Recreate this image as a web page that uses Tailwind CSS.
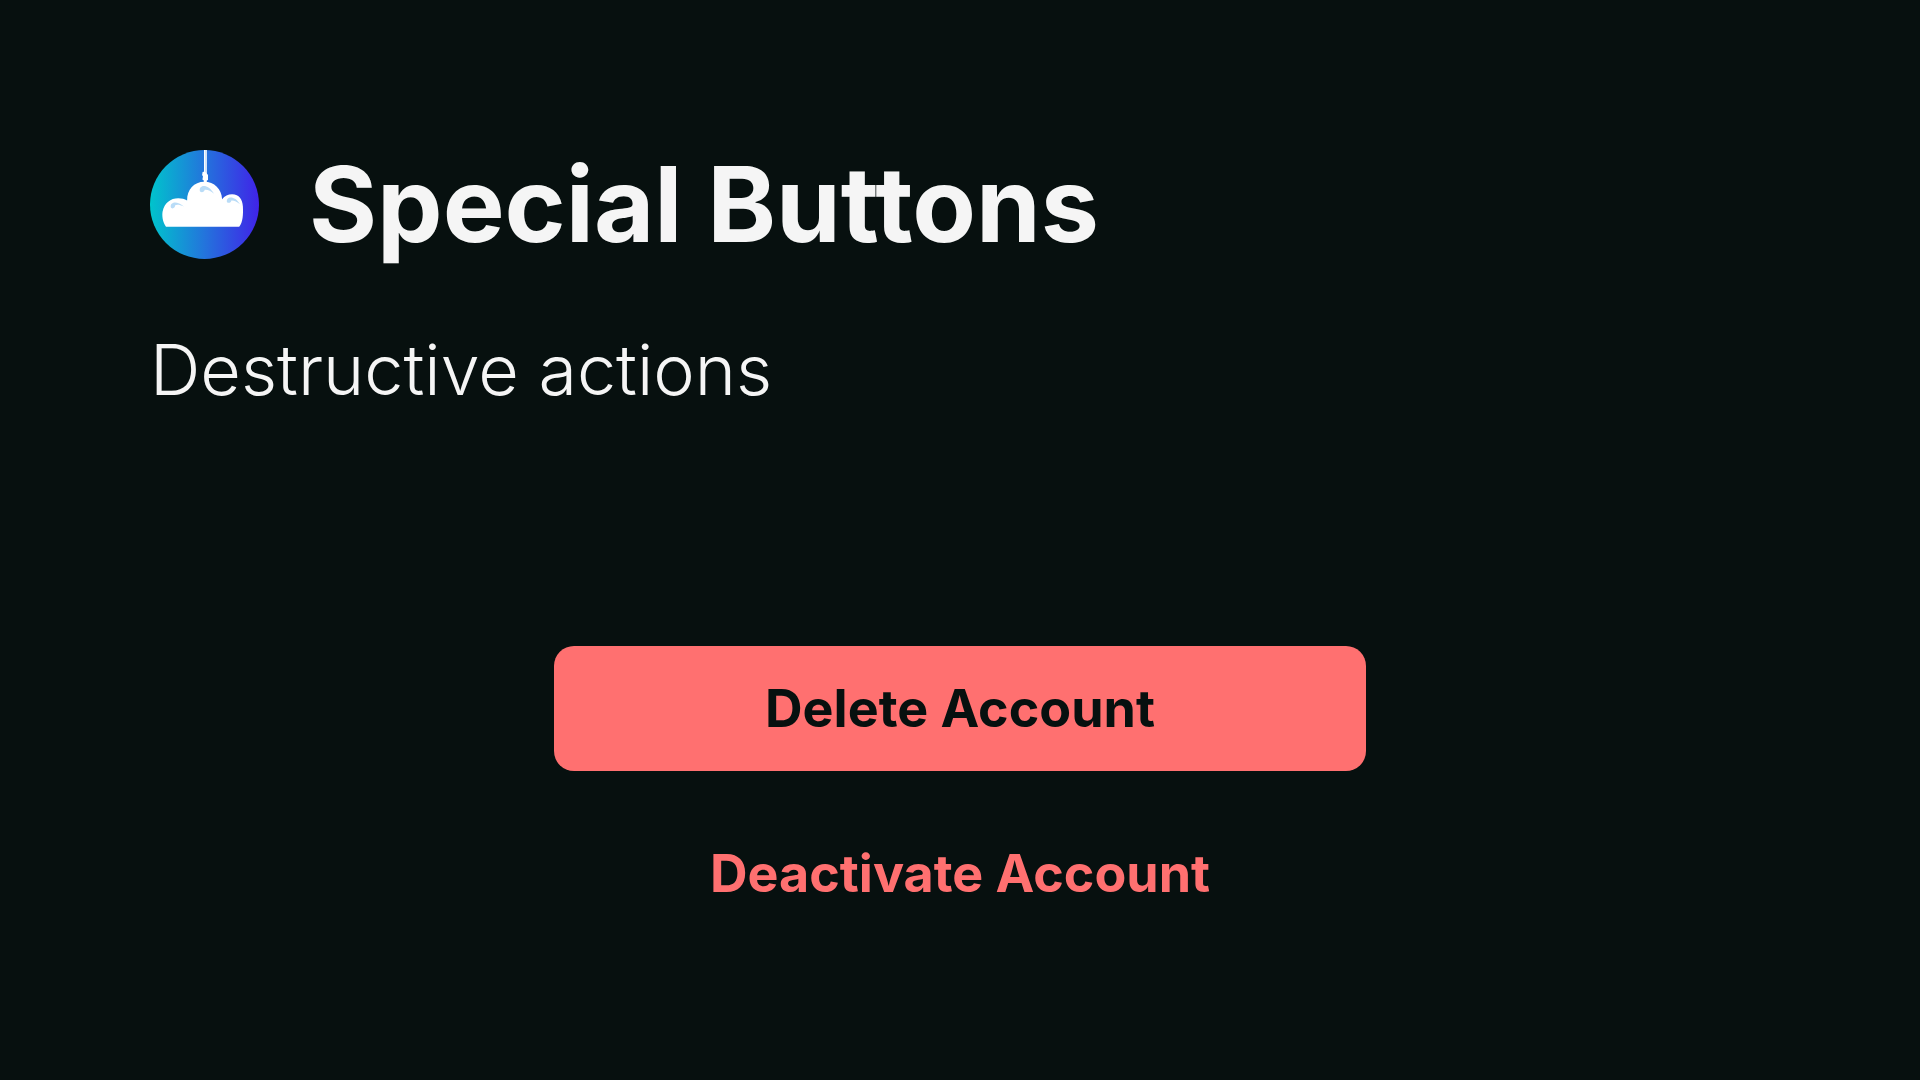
<!DOCTYPE html>
<html lang="en">
  <head>
    <meta charset="UTF-8">
    <meta name="viewport" content="width=device-width, initial-scale=1.0">
    <title>Special Buttons</title>
    <script src="https://cdn.jsdelivr.net/npm/@tailwindcss/browser@4"></script>
  </head>
  <body class="bg-[#07100f] min-h-screen font-['Inter',sans-serif] text-[#f5f5f5]">
    <main class="px-[150px] pt-[144px] pb-16">
      <header>
        <div class="flex items-center gap-[50px]">
          <svg class="size-[109px] shrink-0" viewBox="0 0 109 109" fill="none" role="img" aria-label="Logo">
            <defs>
              <linearGradient id="sky" x1="0" y1="0" x2="1" y2="0">
                <stop offset="0" stop-color="#00c4cc" />
                <stop offset="0.5" stop-color="#2374dc" />
                <stop offset="1" stop-color="#4023e8" />
              </linearGradient>
            </defs>
            <circle cx="54.5" cy="54.5" r="54.5" fill="url(#sky)" />
            <!-- rope -->
            <path d="M54 0h2.8v24H54z" fill="#fff" />
            <path d="M55.4 0v23" stroke="#a9cdf5" stroke-width="0.6" />
            <path d="M52.600 22l2.200-.4 2.400 2.400.8 1v5l-1.200.6v1.600h-3v-1.600l-1.400-1.200.6-3-.9-1.400z" fill="#fff" />
            <!-- cloud -->
            <path d="M16 76.7C12.4 72 11.9 65 12.6 61.5 14.4 53 20.5 48.3 28.3 48.3c3.4 0 6.3.9 8.8 2.2C37 39.500 44 31.700 54.300 31.700c10 0 17.400 7.300 17.800 17.500 2.500-3.200 6-4.900 10-4.900 7.200 0 10.300 5 10.800 12.200.4 8 0 16-3.700 20.200z" fill="#fff" />
            <g fill="#b9dcf7">
              <path d="M21 57.800C19.300 52.800 25.800 49.500 34 56.600 29.500 54.300 26.500 54.300 25.200 55.300 25 57.800 23 59.300 21 57.800z" />
              <path d="M50 41.500C48 35.200 57.500 32.500 64 43.800 60.500 40.500 57.500 39.300 54.700 39.700 54.300 42 52 43 50 41.500z" />
              <path d="M77 52.300C75.500 46.500 84.500 44.500 90 54.300 87 51.500 84 50.300 81.400 50.500 81 52.600 79 53.500 77 52.300z" />
            </g>
          </svg>
          <h1 class="text-[104px] leading-[120px] font-bold">Special Buttons</h1>
        </div>
        <p class="mt-[66px] text-[70px] leading-[80px] font-light">Destructive actions</p>
      </header>

      <section class="mt-[236px] mx-auto max-w-[812px] flex flex-col items-center gap-10">
        <button type="button" class="w-full h-[125px] rounded-[20px] bg-[#ff7070] text-[#07100f] text-[52px] leading-[60px] font-bold cursor-pointer">Delete Account</button>
        <button type="button" class="w-full h-[125px] rounded-[20px] text-[#ff7070] text-[52px] leading-[60px] font-bold cursor-pointer">Deactivate Account</button>
      </section>
    </main>
  </body>
</html>
